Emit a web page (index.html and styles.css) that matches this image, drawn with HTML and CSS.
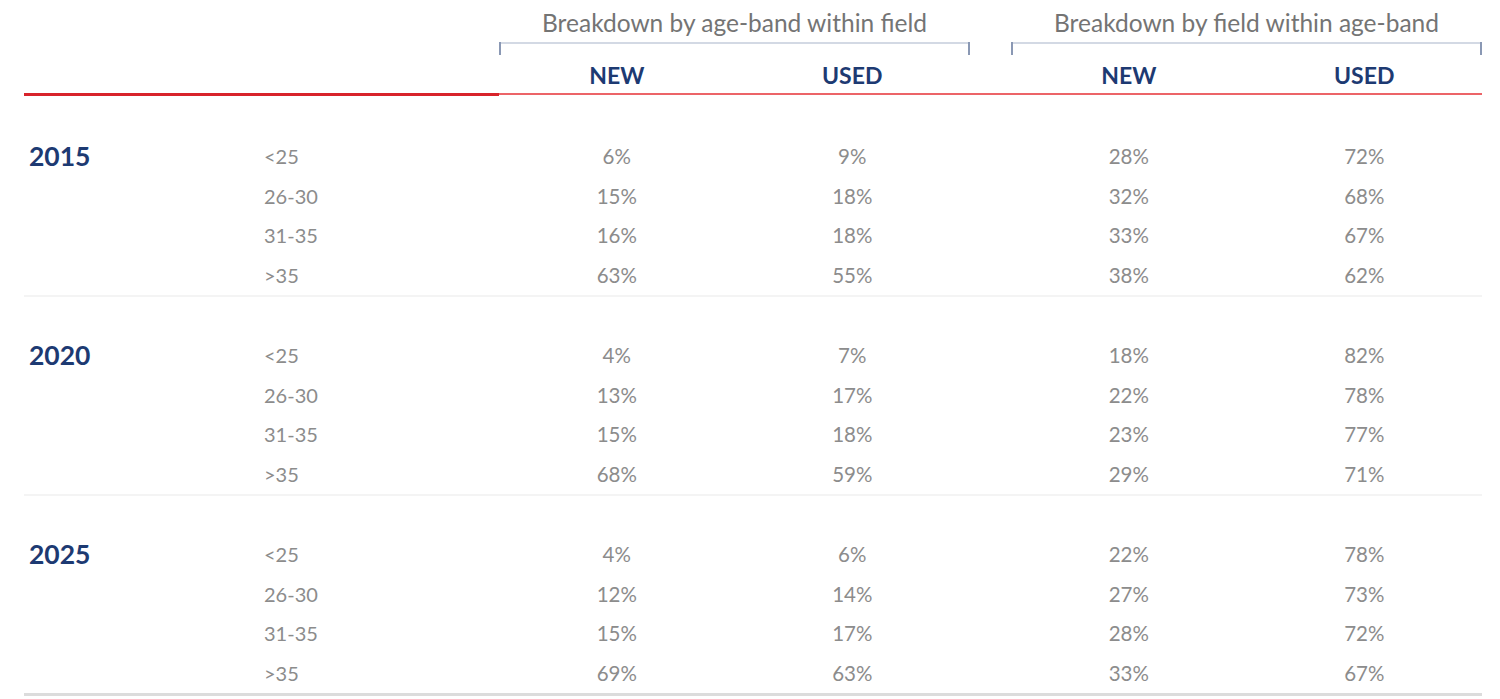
FILE: index.html
```html
<!DOCTYPE html>
<html lang="en">
<head>
<meta charset="utf-8">
<title>Breakdown table</title>
<link rel="stylesheet" href="styles.css">
</head>
<body>
<div class="page">
  <div class="head grid">
    <div class="group-title g1">Breakdown by age-band within field</div>
    <div class="group-title g2">Breakdown by field within age-band</div>
    <div class="bracket g1"><span>NEW</span><span>USED</span></div>
    <div class="bracket g2"><span>NEW</span><span>USED</span></div>
  </div>
  <div class="rule"><div class="rule-left"></div><div class="rule-right"></div></div>

  <section class="block grid first">
    <div class="year">2015</div>
    <div class="age">&lt;25</div><div class="v c3">6%</div><div class="v c4">9%</div><div class="v c6">28%</div><div class="v c7">72%</div>
    <div class="age">26-30</div><div class="v c3">15%</div><div class="v c4">18%</div><div class="v c6">32%</div><div class="v c7">68%</div>
    <div class="age">31-35</div><div class="v c3">16%</div><div class="v c4">18%</div><div class="v c6">33%</div><div class="v c7">67%</div>
    <div class="age">&gt;35</div><div class="v c3">63%</div><div class="v c4">55%</div><div class="v c6">38%</div><div class="v c7">62%</div>
  </section>

  <section class="block grid">
    <div class="year">2020</div>
    <div class="age">&lt;25</div><div class="v c3">4%</div><div class="v c4">7%</div><div class="v c6">18%</div><div class="v c7">82%</div>
    <div class="age">26-30</div><div class="v c3">13%</div><div class="v c4">17%</div><div class="v c6">22%</div><div class="v c7">78%</div>
    <div class="age">31-35</div><div class="v c3">15%</div><div class="v c4">18%</div><div class="v c6">23%</div><div class="v c7">77%</div>
    <div class="age">&gt;35</div><div class="v c3">68%</div><div class="v c4">59%</div><div class="v c6">29%</div><div class="v c7">71%</div>
  </section>

  <section class="block grid last">
    <div class="year">2025</div>
    <div class="age">&lt;25</div><div class="v c3">4%</div><div class="v c4">6%</div><div class="v c6">22%</div><div class="v c7">78%</div>
    <div class="age">26-30</div><div class="v c3">12%</div><div class="v c4">14%</div><div class="v c6">27%</div><div class="v c7">73%</div>
    <div class="age">31-35</div><div class="v c3">15%</div><div class="v c4">17%</div><div class="v c6">28%</div><div class="v c7">72%</div>
    <div class="age">&gt;35</div><div class="v c3">69%</div><div class="v c4">63%</div><div class="v c6">33%</div><div class="v c7">67%</div>
  </section>
</div>
</body>
</html>
```
FILE: styles.css
```css
* { box-sizing: border-box; }
html, body { margin: 0; padding: 0; background: #fff; }
body { font-family: Lato, "Open Sans", sans-serif; }
.page { width: 1458px; margin-left: 24px; }

.grid {
  display: grid;
  grid-template-columns: 240px 235px 235.5px 235.5px 41px 235.5px 235.5px;
}

.group-title {
  grid-row: 1;
  height: 42px;
  padding-top: 8px;
  line-height: 30px;
  font-size: 24.5px;
  color: #747474;
  text-align: center;
  white-space: nowrap;
}
.group-title.g1 { grid-column: 3 / 5; }
.group-title.g2 { grid-column: 6 / 8; }

.bracket {
  grid-row: 2;
  position: relative;
  display: grid;
  grid-template-columns: 1fr 1fr;
  border-top: 2px solid #d3d9e4;
  padding-top: 17px;
  height: 50px;
}
.bracket.g1 { grid-column: 3 / 5; }
.bracket.g2 { grid-column: 6 / 8; }
.bracket::before, .bracket::after {
  content: "";
  position: absolute;
  top: -2px;
  width: 2px;
  height: 13px;
  background: #8a98b4;
}
.bracket::before { left: 0; }
.bracket::after { right: 0; }
.bracket span {
  text-align: center;
  line-height: 28px;
  font-size: 23px;
  font-weight: 700;
  color: #1d3a72;
}

.rule { display: flex; align-items: center; height: 4px; }
.rule-left { width: 475px; height: 3px; background: #d8232b; }
.rule-right { flex: 1; height: 2px; background: #ec6468; }

.block {
  grid-auto-rows: 39.5px;
  padding-top: 39px;
  border-bottom: 2px solid #f4f4f4;
}
.block.first { padding-top: 41px; }
.block.last { border-bottom: 3px solid #dcdcdc; }

.year {
  grid-column: 1;
  grid-row: 1 / 5;
  align-self: start;
  line-height: 39.5px;
  padding-left: 5px;
  font-size: 26.5px;
  font-weight: 700;
  color: #1d3a72;
}
.age {
  grid-column: 2;
  line-height: 39.5px;
  font-size: 20px;
  color: #8c8c8c;
}
.v {
  line-height: 39.5px;
  font-size: 20.5px;
  color: #8c8c8c;
  text-align: center;
}
.c3 { grid-column: 3; }
.c4 { grid-column: 4; }
.c6 { grid-column: 6; }
.c7 { grid-column: 7; }
```
